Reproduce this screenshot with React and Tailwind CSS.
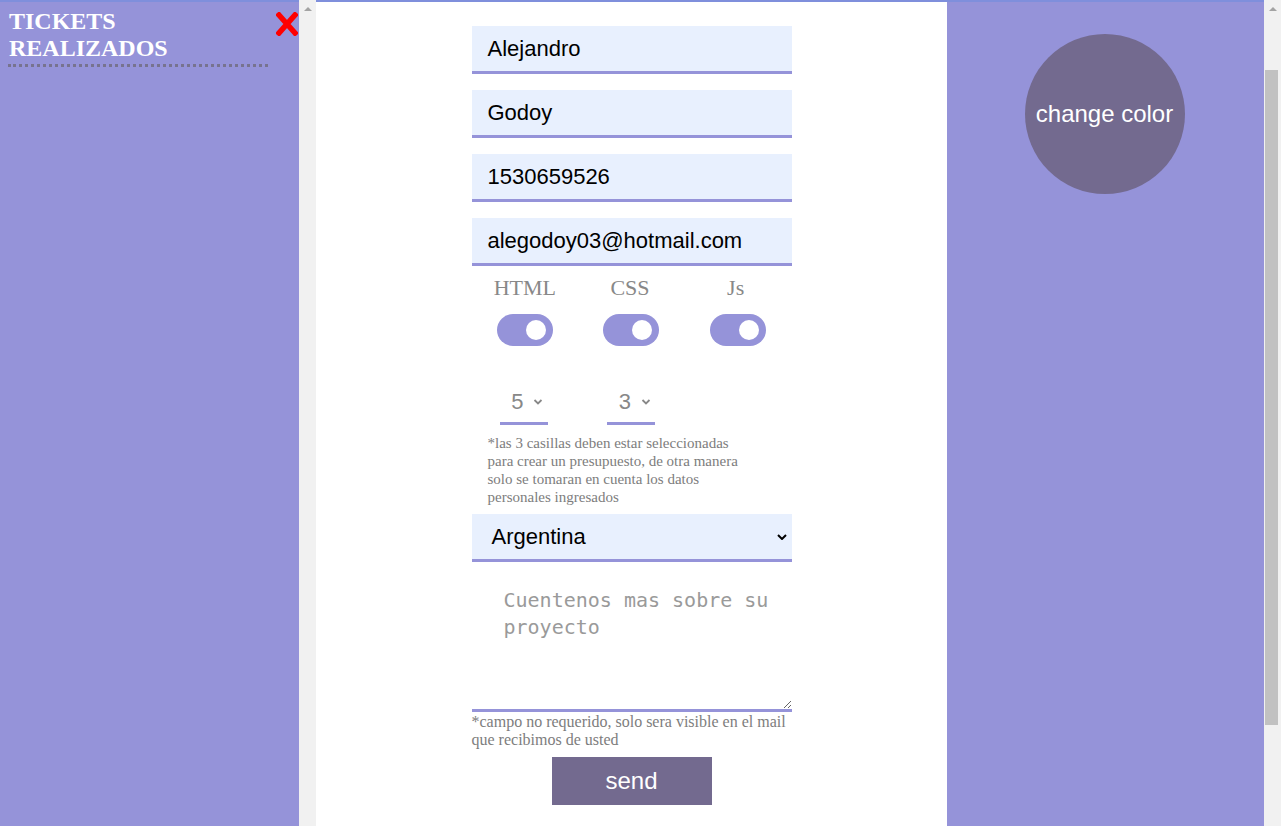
import { useState } from 'react'

const sans = "font-['Liberation_Sans',Arial,sans-serif]"
const serif = "font-['Liberation_Serif','Times_New_Roman',serif]"

function Field({ value }) {
  return (
    <div className={`mb-4 flex h-[48px] items-center border-b-[3px] border-[#9593d9] bg-[#e8f0fe] px-4 text-[22px] text-black ${sans}`}>
      {value}
    </div>
  )
}

function Toggle() {
  return (
    <div className="flex h-[32px] w-[56px] items-center justify-end rounded-full bg-[#9593d9] pr-[7px]">
      <div className="h-[20px] w-[20px] rounded-full bg-white" />
    </div>
  )
}

function Chevron({ className }) {
  return (
    <svg viewBox="0 0 10 6" className={className} fill="none" stroke="currentColor" strokeWidth="1.8">
      <path d="M1.5 1l3.5 3.5 3.5-3.5" />
    </svg>
  )
}

function Scrollbar({ thumb }) {
  return (
    <div className="relative h-full w-[17px] shrink-0 bg-[#f1f1f1]">
      <div className="absolute left-[5px] top-[7px] h-0 w-0 border-x-[4px] border-b-[4px] border-x-transparent border-b-[#a3a3a3]" />
      {thumb ? <div className="absolute left-[1px] top-[70px] h-[655px] w-[13px] bg-[#c1c1c1]" /> : null}
    </div>
  )
}

export default function App() {
  const [notes, setNotes] = useState('')

  return (
    <div className="flex h-[826px] w-[1281px] overflow-hidden bg-white">
      <aside className="h-full w-[299px] shrink-0 border-t-2 border-[#7f8fdc] bg-[#9593d9] pt-[6px]">
        <div className="flex items-start">
          <h1 className={`ml-2 w-[260px] border-b-[3px] border-dotted border-[#77738f] pb-[2px] pl-[1px] text-[24px] font-bold leading-[27px] text-white ${serif}`}>
            TICKETS<br />REALIZADOS
          </h1>
          <svg viewBox="0 0 22 24" className="ml-[8px] mt-[4px] h-[24px] w-[22px]">
            <path d="M3 3L19 21M19 3L3 21" stroke="#ff0000" strokeWidth="5.5" strokeLinecap="square" />
          </svg>
        </div>
      </aside>

      <Scrollbar />

      <main className="h-full w-[631px] shrink-0 border-t-2 border-[#7f8fdc] bg-white pt-6">
        <form className="mx-auto w-[320px]">
          <Field value="Alejandro" />
          <Field value="Godoy" />
          <Field value="1530659526" />
          <Field value="alegodoy03@hotmail.com" />

          <div className={`-mt-[6px] grid h-[24px] grid-cols-3 text-center text-[22px] leading-[24px] text-[#888888] ${serif}`}>
            <span className="">HTML</span>
            <span className="-ml-[3px]">CSS</span>
            <span className="-ml-[5px]">Js</span>
          </div>

          <div className="mt-[14px] grid grid-cols-3 justify-items-center">
            <Toggle />
            <Toggle />
            <Toggle />
          </div>

          <div className={`mt-[36px] grid grid-cols-3 justify-items-center text-[22px] text-[#888888] ${sans}`}>
            <div className="-ml-[2px] flex h-[43px] w-[48px] items-center justify-center gap-[10px] border-b-[3px] border-[#9593d9] pb-[2px] pl-[7px]">
              5<Chevron className="mt-[2px] h-[6px] w-[10px]" />
            </div>
            <div className="flex h-[43px] w-[48px] items-center justify-center gap-[10px] border-b-[3px] border-[#9593d9] pb-[2px] pl-[7px]">
              3<Chevron className="mt-[2px] h-[6px] w-[10px]" />
            </div>
          </div>

          <p className={`mt-[9px] pl-4 text-[15px] leading-[18px] text-[#7d7d7d] ${serif}`}>
            *las 3 casillas deben estar seleccionadas<br />
            para crear un presupuesto, de otra manera<br />
            solo se tomaran en cuenta los datos<br />
            personales ingresados
          </p>

          <div className={`mt-[8px] flex h-[48px] items-center justify-between border-b-[3px] border-[#9593d9] bg-[#e8f0fe] pl-5 pr-[5px] text-[22px] text-black ${sans}`}>
            Argentina
            <svg viewBox="0 0 10 6" className="h-[6px] w-[10px]" fill="none" stroke="#000" strokeWidth="2">
              <path d="M1 1l4 4 4-4" />
            </svg>
          </div>

          <textarea
            value={notes}
            onChange={(event) => setNotes(event.target.value)}
            placeholder="Cuentenos mas sobre su proyecto"
            className="mt-[12px] block h-[138px] w-full resize border-b-[3px] border-[#9593d9] bg-white pl-8 pr-3 pt-[13px] font-['DejaVu_Sans_Mono','Liberation_Mono',monospace] text-[20px] leading-[27px] text-black outline-none placeholder:text-[#9a9a9a]"
          />

          <p className={`mt-px text-[16px] leading-[18px] text-[#7d7d7d] ${serif}`}>
            *campo no requerido, solo sera visible en el mail<br />
            que recibimos de usted
          </p>

          <button type="button" className={`mx-auto mt-[8px] block h-[48px] w-[160px] bg-[#736a8f] text-[24px] text-white ${sans}`}>
            send
          </button>
        </form>
      </main>

      <section className="flex h-full w-[317px] shrink-0 justify-center border-t-2 border-[#7f8fdc] bg-[#9593d9] pr-[2px] pt-8">
        <button type="button" className={`flex h-[160px] w-[160px] items-center justify-center rounded-full bg-[#736a8f] text-[24px] text-white ${sans}`}>
          change color
        </button>
      </section>

      <Scrollbar thumb />
    </div>
  )
}
